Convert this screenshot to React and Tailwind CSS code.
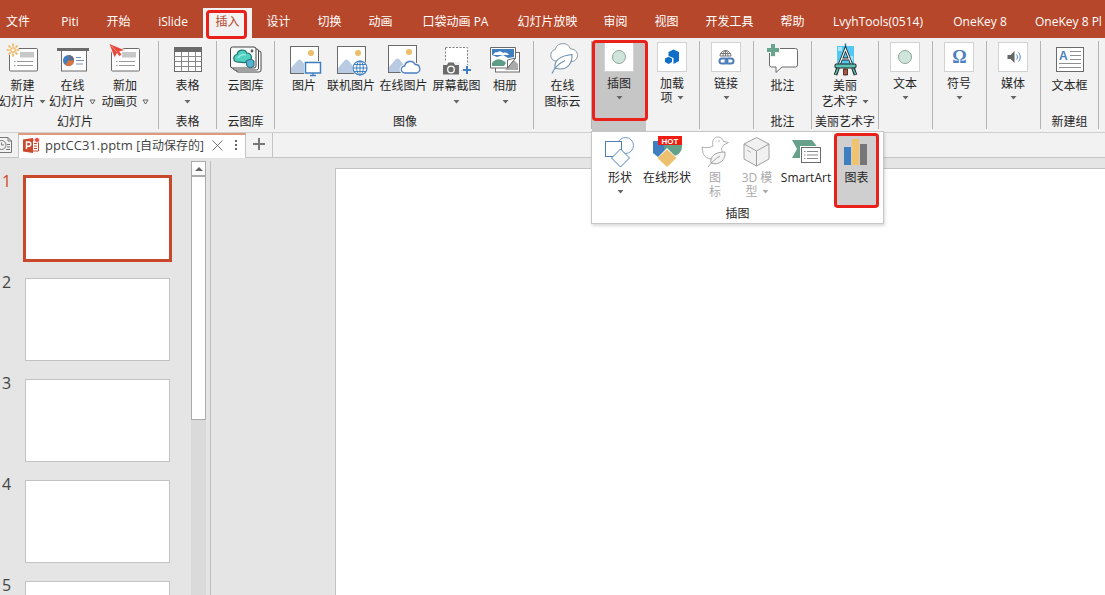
import React from "react";

const G = "#6b6b6b";
const B = "#3f7fbf";

function Icon({ children, className = "h-9 w-9" }) {
  return (
    <svg viewBox="0 0 36 36" className={`mb-px shrink-0 ${className}`} fill="none" aria-hidden="true">
      {children}
    </svg>
  );
}

function Caret({ hollow = false, color = "#666" }) {
  return hollow ? (
    <svg viewBox="0 0 7 6" className="h-[6px] w-[7px] shrink-0" fill="none" aria-hidden="true">
      <path d="M1 1h5L3.500 5z" stroke="#555" strokeWidth="0.900" />
    </svg>
  ) : (
    <svg viewBox="0 0 7 4" className="h-1 w-[7px] shrink-0" aria-hidden="true">
      <path d="M0.500 0h6L3.500 3.500z" fill={color} />
    </svg>
  );
}

function SlideCard() {
  return (
    <>
      <rect x="4.500" y="7.500" width="28" height="22.500" rx="1" fill="#fff" stroke={G} />
      <rect x="15" y="11" width="14" height="5.500" fill="#c8c8c8" />
      <path d="M9 20.500h1.500M12 20.500h16M9 24.500h1.500M12 24.500h16" stroke="#999" />
    </>
  );
}

const NewSlide = () => (
  <Icon>
    <SlideCard />
    <circle cx="8" cy="9" r="6" fill="#f2f2f2" />
    <path d="M8 2.500v3M8 12.500v3M1.500 9h3M11.500 9h3M3.500 4.500l2 2M10.500 11.500l2 2M12.500 4.500l-2 2M5.500 11.500l-2 2" stroke="#ecb75c" strokeWidth="1.700" />
    <circle cx="8" cy="9" r="2.200" stroke="#ecb75c" strokeWidth="1.300" fill="#fff" />
  </Icon>
);

const OnlineSlide = () => (
  <Icon>
    <rect x="6.500" y="9.500" width="25" height="20.500" fill="#fff" stroke={G} />
    <rect x="2" y="7" width="32" height="3" fill={G} />
    <circle cx="13.500" cy="19.500" r="5.500" fill={B} />
    <path d="M13.500 19.500V14a5.500 5.500 0 0 1 5.500 5.500 5.500 5.500 0 0 1-9 4.200z" fill="#d9733f" />
    <path d="M13.500 19.500V14a5.500 5.500 0 0 1 5.500 5.500z" fill="#5d6f8f" />
    <path d="M21 16.500h5M21 19.500h8M21 23h7" stroke="#7b95b3" />
  </Icon>
);

const AnimatedPage = () => (
  <Icon>
    <SlideCard />
    <path d="M2 2.500L17 9l-5 2 2.500 2.500-2 1.500-2.500-2.500L8 17z" fill="#f2f2f2" stroke="#f2f2f2" strokeWidth="2" />
    <path d="M2.500 3L17 9l-5 1.500 2.500 3-2 1.500-2.500-3L7.500 16z" fill="#e8483b" />
    <path d="M4 4.500l6.500 7" stroke="#f6b3ac" strokeWidth="0.700" />
  </Icon>
);

const TableIcon = () => (
  <Icon>
    <rect x="4.500" y="7.500" width="27" height="23" fill="#fff" stroke={G} />
    <rect x="4" y="6" width="28" height="5" fill={G} />
    <path d="M11.500 11v19.500M18.500 11v19.500M25.500 11v19.500M4.500 15.500h27M4.500 20.500h27M4.500 25.500h27" stroke="#8a8a8a" />
  </Icon>
);

const CloudGallery = () => (
  <Icon>
    <rect x="8" y="10" width="25" height="21" rx="2" fill="#fff" stroke="#444" />
    <rect x="5" y="8" width="25.500" height="21" rx="2" fill="#fff" stroke="#444" />
    <rect x="2.500" y="6" width="25.500" height="21" rx="2" fill="#f8fafa" stroke="#444" />
    <path d="M9 21a3.800 3.800 0 0 1 0-7.500 5.300 5.300 0 0 1 10-1.500 4.500 4.500 0 0 1 2 8.500c-3 2-8 1-12 .5z" fill="#4fd0c0" stroke="#24736f" strokeWidth="1.200" />
    <path d="M10 17c2-3 5-4 8-3" stroke="#a1eee4" strokeWidth="1.300" />
    <path d="M18 20l5-2 3 2v5l-4 2-3-2z" fill="#55b2d0" stroke="#286577" />
    <circle cx="24" cy="10" r="1.400" fill="#555" />
  </Icon>
);

function Photo({ x = 4, y = 5 }) {
  return (
    <g transform={`translate(${x} ${y})`}>
      <rect x="0.500" y="0.500" width="28" height="27" fill="#fff" stroke={G} />
      <circle cx="21" cy="7" r="3" fill="#edbd6c" />
      <path d="M1 27V22l7-8c1-.8 2-.8 3 0l5 6 4-4c1-.7 2-.7 3 0l5 5v6z" fill="#b9cbe2" />
    </g>
  );
}

const Picture = () => (
  <Icon>
    <Photo />
    <rect x="18" y="20" width="18" height="16" fill="#f2f2f2" />
    <rect x="19.500" y="21.500" width="15" height="10.500" fill="#fff" stroke={B} strokeWidth="1.500" />
    <path d="M27 32v2.500M24 34.500h6" stroke={B} strokeWidth="1.300" />
  </Icon>
);

const WebPicture = () => (
  <Icon>
    <Photo />
    <circle cx="27" cy="27" r="8" fill="#f2f2f2" />
    <circle cx="27" cy="27" r="7" fill="#fff" stroke={B} strokeWidth="1.200" />
    <ellipse cx="27" cy="27" rx="3.300" ry="7" stroke={B} />
    <path d="M27 20v14M20 27h14M21.500 23.500h11M21.500 30.500h11" stroke={B} />
  </Icon>
);

const OnlinePicture = () => (
  <Icon>
    <Photo x={2} y={4} />
    <path d="M19 32a3.500 3.500 0 0 1-.3-7 5.600 5.600 0 0 1 10.500-1.500A4.400 4.400 0 0 1 31 32z" fill="#fff" stroke="#f2f2f2" strokeWidth="3.500" />
    <path d="M19 32a3.500 3.500 0 0 1-.3-7 5.600 5.600 0 0 1 10.500-1.500A4.400 4.400 0 0 1 31 32z" fill="#fff" stroke="#4a7fc1" strokeWidth="1.300" />
  </Icon>
);

const Screenshot = () => (
  <Icon>
    <rect x="6.500" y="6.500" width="22" height="23" fill="#fff" stroke="#7c7c7c" strokeDasharray="2 1.500" />
    <path d="M3 21h18v13H3z" fill="#f2f2f2" />
    <path d="M4 24h4l1.500-2.500h5L16 24h4v9.500H4z" fill={G} />
    <circle cx="12" cy="28.500" r="3.300" stroke="#fff" strokeWidth="1.300" />
    <path d="M23 29h10M28 24v10" stroke="#f2f2f2" strokeWidth="5" />
    <path d="M24 29h8M28 25v8" stroke={B} strokeWidth="2" />
  </Icon>
);

const Album = () => (
  <Icon>
    <rect x="8.500" y="11.500" width="24" height="19.500" fill="#fff" stroke={G} />
    <path d="M18 29l9-10 4 4v6z" fill="#aaa" />
    <path d="M3.500 6.500h25V17l-8 10h-17z" fill="#fff" stroke={G} />
    <path d="M5 8h22v8l-6 1-5-3-6 2-5-2z" fill={B} />
    <path d="M6 14c2-4 4-2 5-3 2-2 4 0 5 1 3-1 5 0 6 2z" fill="#fff" />
    <path d="M5 22c4-5 9-5 14 0l-2 3H5z" fill="#5d9d86" />
    <path d="M28.500 17l-8 10v-8z" fill="#fff" stroke={G} />
  </Icon>
);

const LeafCloud = () => (
  <Icon>
    <path d="M10 20a6 6 0 0 1 .2-11.500 8 8 0 0 1 15.300-.5A6.200 6.200 0 0 1 27 20.500z" fill="#fff" stroke="#8b96a3" />
    <path d="M10 27c-1-8 5-12 17-13.500.5 10-6 17-17 13.500z" fill="#fff" stroke="#6c8eaf" strokeWidth="1.100" />
    <path d="M7 32.500c2-5 7-10 13-13" stroke="#6c8eaf" strokeWidth="1.100" />
  </Icon>
);

const Comment = () => (
  <Icon>
    <path d="M6 7.500h24.500a2 2 0 0 1 2 2V24a2 2 0 0 1-2 2H17l-6 5.500V26H6.500a2 2 0 0 1-2-2V9z" fill="#fff" stroke={G} />
    <path d="M8 2v14M1 9h14" stroke="#f2f2f2" strokeWidth="6" />
    <path d="M8 3v12M2 9h12" stroke="#68a58f" strokeWidth="4" />
  </Icon>
);

const Easel = () => (
  <Icon>
    <rect x="10" y="5" width="17" height="18" fill="#54c8f2" />
    <path d="M11 6h4v4h-4zM21 15h5v5h-5zM22 6l4 3" fill="#a6e8ff" />
    <path d="M18.500 2.500v5" stroke="#2c7fa8" strokeWidth="1.500" />
    <path d="M12.500 23L18.500 8 24.500 23M14.500 18h8" stroke="#222" strokeWidth="2.800" />
    <path d="M12.500 23L18.500 8 24.500 23M14.500 18h8" stroke="#f7f7f7" strokeWidth="1.200" />
    <rect x="8" y="23" width="21" height="4" rx="1" fill="#58c5b6" stroke="#222" />
    <path d="M11 27L8.500 34M26 27l2.500 7" stroke="#222" strokeWidth="3.600" />
    <path d="M11 27.500L8.500 33.500M26 27.500l2.500 6" stroke="#58c5b6" strokeWidth="1.500" />
    <path d="M16.500 28h4v6h-4z" fill="#b45339" stroke="#222" strokeWidth="0.800" />
  </Icon>
);

const TextBox = () => (
  <Icon>
    <rect x="4.500" y="6.500" width="27" height="24" fill="#fff" stroke={G} />
    <text x="7" y="19" fontFamily="Liberation Sans" fontWeight="bold" fontSize="12" fill="#4a80bd">A</text>
    <path d="M18 10.500h11M18 14.500h11M18 18.500h11M7 22.500h22M7 26.500h22" stroke="#8f8f8f" />
  </Icon>
);

function Boxed({ children }) {
  return (
    <span className="mt-px mb-[5px] flex h-[30px] w-[30px] items-center justify-center border border-[#d2d2d2] bg-white">
      <svg viewBox="0 0 28 28" className="h-7 w-7" fill="none" aria-hidden="true">{children}</svg>
    </span>
  );
}

const Dot = () => (
  <Boxed>
    <circle cx="14" cy="14" r="6.500" fill="#cfe5dc" stroke="#8fa69d" />
  </Boxed>
);
const AddIn = () => (
  <Boxed>
    <path d="M15.500 6.500l5.500 2.500v9L15.500 21v-6l-5-2V9z" fill="#0f6fc6" />
    <path d="M7 15.500l3.500-1.700 3.500 1.700v3.500l-3.500 2-3.500-2z" fill="#0f6fc6" />
  </Boxed>
);
const LinkIcon = () => (
  <Boxed>
    <path d="M8 13a5.500 5.500 0 0 1 11 0zM13.500 7.500V13M8.500 10.500h10M11 13c0-3 1-5 2.500-5.500C15 8 16 10 16 13" stroke="#777" />
    <rect x="7.500" y="15.500" width="8" height="5" rx="2.500" stroke="#4a7dba" strokeWidth="2" />
    <rect x="13.500" y="15.500" width="8" height="5" rx="2.500" stroke="#4a7dba" strokeWidth="2" />
  </Boxed>
);
const Omega = () => (
  <Boxed>
    <text x="14.500" y="20" textAnchor="middle" fontFamily="Liberation Serif" fontWeight="bold" fontSize="18" fill="#4a7fc1">Ω</text>
  </Boxed>
);
const Speaker = () => (
  <Boxed>
    <path d="M8.500 12h3l4-4v12l-4-4h-3z" fill="#666" />
    <path d="M17.500 11.500c1.300 1.500 1.300 3.500 0 5M19.500 9.500c2.300 2.500 2.300 6.500 0 9" stroke="#4a7fc1" />
  </Boxed>
);

const Shapes = () => (
  <Icon>
    <circle cx="23.500" cy="11.500" r="8" fill="#fff" stroke="#6f9bc8" />
    <rect x="3.500" y="7.500" width="16" height="15" fill="#fff" stroke="#4a80b8" />
    <path d="M18.500 15l9 9-9 9-9-9z" fill="#fff" stroke="#4a80b8" />
  </Icon>
);
const HotShapes = () => (
  <Icon>
    <path d="M4 7h14v16H9l-5-4z" fill={B} />
    <circle cx="24" cy="13" r="9" fill="#64a18b" />
    <path d="M18 14l10 10-10 9L8 24z" fill="#fff" />
    <path d="M18 15.500l9.500 8.500-9.500 9-9.500-9z" fill="#ecc06e" />
    <rect x="9" y="2" width="24" height="9" fill="#ee1c12" />
    <text x="21" y="9.500" textAnchor="middle" fontFamily="Liberation Sans" fontWeight="bold" fontSize="8" fill="#fff">HOT</text>
  </Icon>
);
const Duck = () => (
  <Icon>
    <path d="M5 13c3 1 8 1 11-1-1.500-5 1-9 5-9 3 0 5 2 5.500 4.500l5 1-5 2.500c-1 2-2 3-2 4 2 4-1 9-5 10-6 1-12-1-13.500-6z" fill="#fff" stroke="#b0b0b0" />
    <circle cx="22" cy="7" r="0.800" fill="#aaa" />
    <path d="M14 29c-1-7 4-11 14-11 1 8-6 14-14 11z" fill="#f4f4f4" stroke="#a3a3a3" />
    <path d="M11 33c3-4 7-8 12-11" stroke="#a3a3a3" />
  </Icon>
);
const Cube = () => (
  <Icon>
    <path d="M17.500 3.500L30 10v15l-12.500 7L5 25V10z" fill="#f1f1f1" stroke="#a0a0a0" />
    <path d="M5 10l12.500 7L30 10M17.500 17v15" stroke="#a0a0a0" />
    <path d="M8 16l4 2.500" stroke="#a0a0a0" strokeWidth="0.800" />
  </Icon>
);
const SmartArtIcon = () => (
  <Icon>
    <path d="M4 6h20l7 9-6 9H4l5-9z" fill="#67a18b" />
    <rect x="12" y="12" width="22" height="18" fill="#fff" />
    <rect x="13.500" y="13.500" width="19" height="15" fill="#fff" stroke={G} />
    <path d="M16 17.500h1.500M19 17.500h11M16 21h1.500M19 21h11M16 24.500h1.500M19 24.500h11" stroke="#888" />
  </Icon>
);
const Chart = () => (
  <Icon>
    <rect x="5" y="13" width="7" height="18" fill={B} />
    <rect x="13" y="5" width="7" height="26" fill="#f1c36f" />
    <rect x="21" y="10" width="7" height="21" fill="#777" />
  </Icon>
);

function Highlight({ className }) {
  return <span aria-hidden="true" className={`pointer-events-none absolute z-20 rounded border-3 border-[#e8221b] ${className}`} />;
}

function Group({ label, width, children, className = "border-r border-[#b5b5b5]" }) {
  return (
    <section className={`relative flex h-[88px] shrink-0 flex-col ${width} ${className}`}>
      <div className="flex flex-1 justify-center">{children}</div>
      {label && <h2 className="text-center leading-[14px] whitespace-nowrap">{label}</h2>}
    </section>
  );
}

function Tool({ icon, line1, line2, caret, width = "w-full", tight = false, muted = false }) {
  return (
    <button
      type="button"
      className={`relative flex shrink-0 flex-col items-center whitespace-nowrap ${width} ${tight ? "leading-[14px]" : "leading-4"} ${muted ? "text-[#aaa]" : ""}`}
    >
      {icon}
      <span className="block">{line1}</span>
      {(line2 || caret) && (
        <span className={`flex items-center gap-1 ${tight ? "h-[14px]" : "h-4"}`}>
          {line2}
          {caret && <Caret hollow={caret === "hollow"} color={muted ? "#aaa" : "#666"} />}
        </span>
      )}
    </button>
  );
}

const tabs = [
  ["文件", "w-9 mr-[10px]"],
  ["Piti", "w-11"],
  ["开始", "w-[49px]"],
  ["iSlide", "w-14"],
  ["插入", "w-[49px]"],
  ["设计", "w-[49px]"],
  ["切换", "w-[49px]"],
  ["动画", "w-[49px]"],
  ["口袋动画 PA", "w-[97px]"],
  ["幻灯片放映", "w-[83px]"],
  ["审阅", "w-[49px]"],
  ["视图", "w-[49px]"],
  ["开发工具", "w-[73px]"],
  ["帮助", "w-[49px]"],
  ["LvyhTools(0514)", "w-[118px]"],
  ["OneKey 8", "w-[82px]"],
  ["OneKey 8 Pl", "pl-3"],
];

function TabBar() {
  return (
    <nav className="flex h-[38px] shrink-0 gap-[2px] overflow-hidden bg-[#b7472a] pt-2 text-white">
      {tabs.map(([name, width]) => {
        const active = name === "插入";
        return (
          <button
            key={name}
            type="button"
            className={`relative h-[30px] shrink-0 pb-[3px] whitespace-nowrap ${width} ${active ? "bg-[#f2f2f2] text-[#b7472a]" : ""}`}
          >
            {name}
          </button>
        );
      })}
    </nav>
  );
}

function IllustrationMenu() {
  return (
    <div className="absolute top-[90px] -left-px z-10 w-[293px] border border-[#c6c6c6] bg-white pt-[2px] pb-[2px] shadow-[1px_2px_3px_rgba(0,0,0,0.15)]">
      <div className="flex h-[73px] pl-2">
        <Tool tight icon={<Shapes />} line1="形状" caret="solid" width="w-10" />
        <Tool tight icon={<HotShapes />} line1="在线形状" width="w-[54px]" />
        <Tool tight muted icon={<Duck />} line1="图" line2="标" width="w-[42px]" />
        <Tool tight muted icon={<Cube />} line1="3D 模" line2="型" caret="solid" width="w-[42px]" />
        <Tool tight icon={<SmartArtIcon />} line1="SmartArt" width="w-14" />
        <div className="relative w-[45px] bg-[#cfcfcf]">
          <Tool tight icon={<Chart />} line1="图表" />
          <Highlight className="-inset-y-px inset-x-0" />
        </div>
      </div>
      <h3 className="text-center leading-[14px]">插图</h3>
    </div>
  );
}

function Ribbon() {
  return (
    <div className="relative flex h-[95px] shrink-0 border-b border-[#cfcfcf] bg-[#f2f2f2] pt-[3px]">
      <Highlight className="-top-7 left-[206px] h-[29px] w-[41px]" />
      <Group label="幻灯片" width="w-[159px] pr-2">
        <Tool icon={<NewSlide />} line1="新建" line2="幻灯片" caret="solid" width="w-[45px]" />
        <Tool icon={<OnlineSlide />} line1="在线" line2="幻灯片" caret="hollow" width="w-[55px]" />
        <Tool icon={<AnimatedPage />} line1="新加" line2="动画页" caret="hollow" width="w-[50px]" />
      </Group>
      <Group label="表格" width="w-[58px]">
        <Tool icon={<TableIcon />} line1="表格" caret="solid" />
      </Group>
      <Group label="云图库" width="w-[58px]">
        <Tool icon={<CloudGallery />} line1="云图库" />
      </Group>
      <Group label="图像" width="w-[259px] pl-[2px]">
        <Tool icon={<Picture />} line1="图片" width="w-[42px]" />
        <Tool icon={<WebPicture />} line1="联机图片" width="w-[52px]" />
        <Tool icon={<OnlinePicture />} line1="在线图片" width="w-[53px]" />
        <Tool icon={<Screenshot />} line1="屏幕截图" caret="solid" width="w-[53px]" />
        <Tool icon={<Album />} line1="相册" caret="solid" width="w-11" />
      </Group>
      <Group width="w-[58px]">
        <Tool icon={<LeafCloud />} line1="在线" line2="图标云" />
      </Group>
      <Group width="w-[54px]" className="">
        <div className="h-[90px] w-full shrink-0 bg-[#c6c6c6]">
          <Tool tight icon={<Dot />} line1="插图" caret="solid" />
        </div>
        <Highlight className="-top-px left-0 h-[81px] w-14" />
        <IllustrationMenu />
      </Group>
      <Group width="w-[54px] pr-px">
        <Tool tight icon={<AddIn />} line1="加载" line2="项" caret="solid" />
      </Group>
      <Group width="w-[54px] pr-px">
        <Tool tight icon={<LinkIcon />} line1="链接" caret="solid" />
      </Group>
      <Group label="批注" width="w-[58px]">
        <Tool icon={<Comment />} line1="批注" />
      </Group>
      <Group label="美丽艺术字" width="w-[67px]">
        <Tool icon={<Easel />} line1="美丽" line2="艺术字" caret="solid" />
      </Group>
      <Group width="w-[54px] pr-px">
        <Tool tight icon={<Dot />} line1="文本" caret="solid" />
      </Group>
      <Group width="w-[54px] pr-px">
        <Tool tight icon={<Omega />} line1="符号" caret="solid" />
      </Group>
      <Group width="w-[54px] pr-px">
        <Tool tight icon={<Speaker />} line1="媒体" caret="solid" />
      </Group>
      <Group label="新建组" width="w-[58px]">
        <Tool icon={<TextBox />} line1="文本框" />
      </Group>
    </div>
  );
}

function DocumentTabs() {
  return (
    <div className="flex h-[25px] shrink-0 bg-[#f2f2f2]">
      <button type="button" aria-label="最近的文档" className="w-[18px] border-b border-[#c4c4c4]">
        <svg viewBox="0 0 18 24" className="h-6 w-[18px]" fill="none" stroke="#777" aria-hidden="true">
          <path d="M0 4.500h8l3.500 3.500v11.500H0M8 4.500V8h3.500M7 11.500h3M7 14h3M6 16.500h4" />
          <circle cx="1.500" cy="12" r="4.500" fill="#f2f2f2" />
          <path d="M1.500 9.500V12h2.500" />
        </svg>
      </button>
      <div className="flex w-[228px] items-center border-t-2 border-r border-l border-t-[#e0997a] border-r-[#c4c4c4] border-l-[#c4c4c4] bg-white pb-[3px] pl-1 text-[#444]">
        <svg viewBox="0 0 17 17" className="mr-[5px] h-[17px] w-[17px] shrink-0" aria-hidden="true">
          <path d="M8 3h7.500v11H8z" fill="#fff" stroke="#cb4a2b" />
          <path d="M0 2.500L10 1v15L0 14.500z" fill="#cb4a2b" />
          <path d="M3.500 12V5h2.200a2 2 0 0 1 0 4.300H3.500" stroke="#fff" strokeWidth="1.500" fill="none" />
          <path d="M11 6.500h3M11 9h3M11 11.500h3" stroke="#cb4a2b" />
          <circle cx="14" cy="3" r="2.500" fill="#e8483b" stroke="#fff" strokeWidth="0.700" />
        </svg>
        <span className="flex-1 text-[13px] leading-5 whitespace-nowrap">
          pptCC31.pptm <span className="text-xs">[自动保存的]</span>
        </span>
        <button type="button" aria-label="关闭" className="mr-[11px]">
          <svg viewBox="0 0 11 11" className="h-[11px] w-[11px]" stroke="#777" aria-hidden="true"><path d="M0.500 0.500l10 10M10.500 0.500l-10 10" /></svg>
        </button>
        <button type="button" aria-label="更多" className="mr-[7px]">
          <svg viewBox="0 0 4 12" className="h-3 w-1" fill="#666" aria-hidden="true"><path d="M1 1h2v2H1zM1 5h2v2H1zM1 9h2v2H1z" /></svg>
        </button>
      </div>
      <button type="button" aria-label="新建标签" className="flex w-[27px] items-center justify-center border-r border-b border-[#c4c4c4] pr-px pb-[2px]">
        <svg viewBox="0 0 12 12" className="h-3 w-3" stroke="#777" strokeWidth="2" aria-hidden="true"><path d="M6 0v12M0 6h12" /></svg>
      </button>
      <div className="flex-1 border-b border-[#c4c4c4]" />
    </div>
  );
}

function Workspace() {
  return (
    <div className="flex min-h-0 flex-1 bg-[#e5e5e5] pt-[3px]">
      <aside className="flex w-[211px] shrink-0 border-r border-[#bdbdbd] pr-1">
        <ol className="flex flex-1 flex-col gap-[18px] overflow-hidden pt-4">
          {[1, 2, 3, 4, 5].map((n) => (
            <li key={n} className="flex shrink-0">
              <span className={`w-[25px] pl-[2px] text-base leading-[8px] ${n === 1 ? "text-[#d24726]" : "text-[#444]"}`}>{n}</span>
              <button
                type="button"
                aria-label={`幻灯片 ${n}`}
                className={`h-[83px] w-[145px] bg-white ${n === 1 ? "outline-3 -outline-offset-1 outline-[#c9482b]" : "border border-[#c3c3c3]"}`}
              />
            </li>
          ))}
        </ol>
        <div className="flex w-[15px] flex-col bg-[#dadada]">
          <button type="button" aria-label="向上滚动" className="flex h-[15px] shrink-0 items-center justify-center border border-[#ababab] bg-white">
            <svg viewBox="0 0 8 4" className="h-1 w-2" fill="#666" aria-hidden="true"><path d="M0 4l4-4 4 4z" /></svg>
          </button>
          <div className="h-[244px] border border-[#ababab] bg-white" />
        </div>
      </aside>
      <main className="flex flex-1 pt-[7px] pl-[124px]">
        <div className="flex-1 border-t border-l border-[#c3c3c3] bg-white" />
      </main>
    </div>
  );
}

export default function App() {
  return (
    <div className="flex h-screen flex-col overflow-hidden bg-[#e5e5e5] font-['Open_Sans','Noto_Sans_CJK_SC',sans-serif] text-xs text-[#262626]">
      <TabBar />
      <Ribbon />
      <DocumentTabs />
      <Workspace />
    </div>
  );
}
